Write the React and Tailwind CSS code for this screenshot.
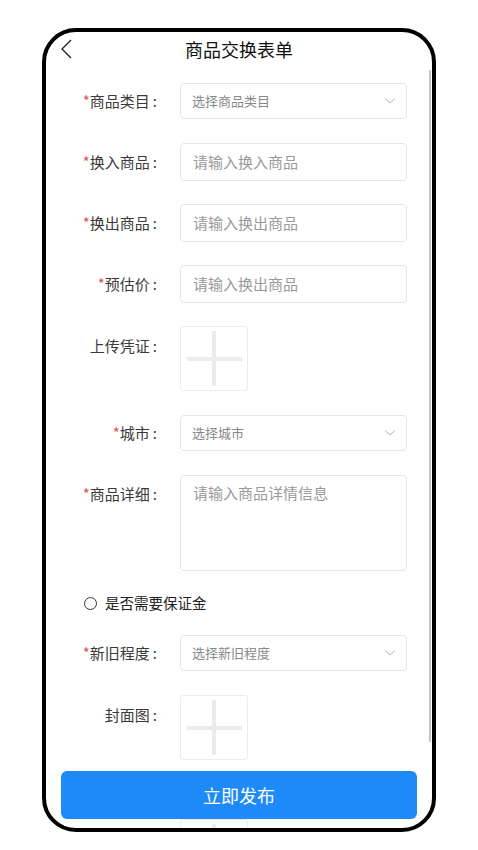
import React from 'react';

const font = { fontFamily: '"Noto Sans CJK SC", "Noto Sans", sans-serif' };

function Label({ text, required, h = 'h-[38px]' }) {
  return (
    <div className={'w-[111px] flex items-center justify-end text-[15px] text-[#3a3a3a] ' + h}>
      {required && <span className="text-[#e05555]">*</span>}
      <span>{text}</span>
      <span className="ml-[3px]">:</span>
    </div>
  );
}

function Chevron() {
  return (
    <svg width="12" height="8" viewBox="0 0 12 8" className="text-[#b5b5b5]">
      <polyline points="1,1.5 6,6 11,1.5" fill="none" stroke="currentColor" strokeWidth="1" />
    </svg>
  );
}

function SelectRow({ label, placeholder, className }) {
  return (
    <div className={'flex items-center gap-[23px] ' + className}>
      <Label text={label} required h="h-[36px]" />
      <div className="w-[227px] h-[36px] border border-[#e6e6e6] rounded-[4px] flex items-center justify-between pl-[11px] pr-[10px] text-[13px] text-[#888]">
        <span>{placeholder}</span>
        <Chevron />
      </div>
    </div>
  );
}

function InputRow({ label, placeholder, className }) {
  return (
    <div className={'flex items-center gap-[23px] ' + className}>
      <Label text={label} required />
      <div className="w-[227px] h-[38px] border border-[#e6e6e6] rounded-[4px] flex items-center pl-[12px] text-[15px] text-[#999]">
        {placeholder}
      </div>
    </div>
  );
}

function Upload() {
  return (
    <div className="w-[68px] h-[65px] border border-[#ececec] rounded-[3px] flex items-center justify-center relative">
      <div className="absolute w-[55px] h-[4px] bg-[#ebebeb]" />
      <div className="absolute w-[4px] h-[55px] bg-[#ebebeb]" />
    </div>
  );
}

function UploadRow({ label, className }) {
  return (
    <div className={'flex items-start gap-[23px] ' + className}>
      <div className="w-[111px] h-[40px] flex items-center justify-end text-[15px] text-[#3a3a3a]">
        {label && <span>{label}</span>}
        {label && <span className="ml-[3px]">:</span>}
      </div>
      <Upload />
    </div>
  );
}

export default function App() {
  return (
    <div className="w-[478px] h-[850px] bg-white" style={font}>
      <div className="absolute left-[42px] top-[28px] w-[394px] h-[804px] border-4 border-black rounded-[34px] overflow-hidden bg-white">
        {/* header */}
        <div className="h-[34px] flex items-center justify-center relative">
          <svg width="14" height="20" viewBox="0 0 14 20" className="absolute left-[13px] top-[7px]">
            <polyline points="12,1 3,10 12,19" fill="none" stroke="#222" strokeWidth="1.4" />
          </svg>
          <span className="text-[18px] text-[#111]">商品交换表单</span>
        </div>

        {/* form */}
        <div className="flex flex-col">
          <SelectRow label="商品类目" placeholder="选择商品类目" className="mt-[17px]" />
          <InputRow label="换入商品" placeholder="请输入换入商品" className="mt-[24px]" />
          <InputRow label="换出商品" placeholder="请输入换出商品" className="mt-[23px]" />
          <InputRow label="预估价" placeholder="请输入换出商品" className="mt-[23px]" />
          <UploadRow label="上传凭证" className="mt-[23px]" />
          <SelectRow label="城市" placeholder="选择城市" className="mt-[24px]" />
          <div className="flex items-start gap-[23px] mt-[24px]">
            <Label text="商品详细" required />
            <div className="w-[227px] h-[96px] border border-[#e6e6e6] rounded-[4px] pl-[12px] pt-[6px] text-[15px] text-[#999]">
              请输入商品详情信息
            </div>
          </div>
          <div className="flex items-center mt-[22px] pl-[38px] h-[20px] text-[14.5px] text-[#222]">
            <span className="w-[13px] h-[13px] rounded-full border border-[#333] mr-[8px]" />
            <span>是否需要保证金</span>
          </div>
          <SelectRow label="新旧程度" placeholder="选择新旧程度" className="mt-[22px]" />
          <UploadRow label="封面图" className="mt-[24px]" />
          <UploadRow label="" className="mt-[59px]" />
        </div>

        {/* scrollbar */}
        <div className="absolute right-[1px] top-[38px] w-[2px] h-[672px] bg-[#c4c4c4]" />

        {/* submit */}
        <div className="absolute left-[15px] right-[15px] bottom-[9px] h-[48px] rounded-[6px] bg-[#1e8af7] flex items-center justify-center text-white text-[18px]">
          立即发布
        </div>
      </div>
    </div>
  );
}
